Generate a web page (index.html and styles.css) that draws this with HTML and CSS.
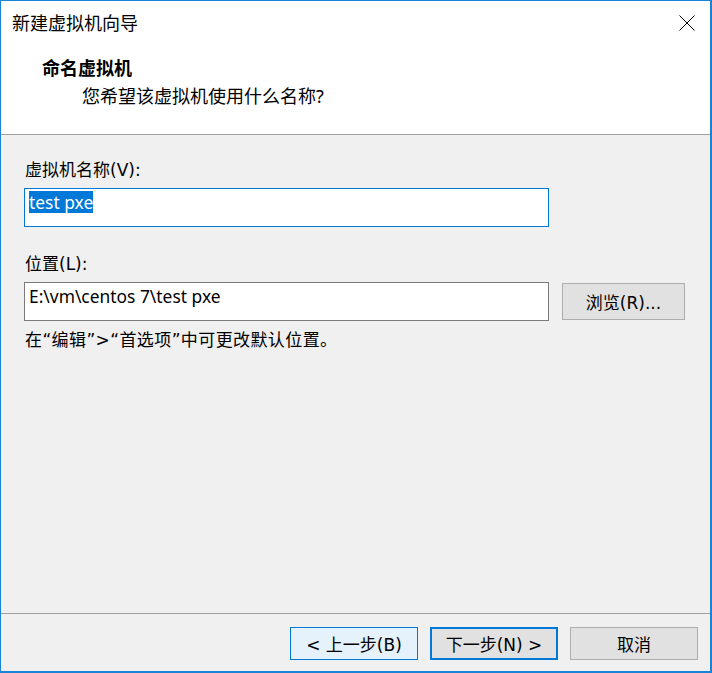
FILE: index.html
```html
<!DOCTYPE html>
<html lang="zh-CN">
<head>
<meta charset="utf-8">
<title>新建虚拟机向导</title>
<link rel="stylesheet" href="styles.css">
</head>
<body>
<div class="window">
  <div class="header">
    <div class="titlebar">
      <span class="title">新建虚拟机向导</span>
      <svg class="close" width="16" height="16" viewBox="0 0 16 16" aria-label="关闭">
        <path d="M0.5 0.5 L15.5 15.5 M15.5 0.5 L0.5 15.5" stroke="#000" stroke-width="1" fill="none"/>
      </svg>
    </div>
    <div class="heading">命名虚拟机</div>
    <div class="subtitle">您希望该虚拟机使用什么名称?</div>
  </div>
  <div class="content">
    <div class="label label-first">虚拟机名称(V):</div>
    <div class="field field-focus"><span class="selected">test pxe</span></div>
    <div class="label label-second">位置(L):</div>
    <div class="row">
      <div class="field">E:\vm\centos 7\test pxe</div>
      <button class="btn btn-browse">浏览(R)...</button>
    </div>
    <div class="hint">在“编辑”&gt;“首选项”中可更改默认位置。</div>
  </div>
  <div class="footer">
    <button class="btn btn-nav btn-hover">&lt; 上一步(B)</button>
    <button class="btn btn-nav btn-default">下一步(N) &gt;</button>
    <button class="btn btn-nav">取消</button>
  </div>
</div>
</body>
</html>
```
FILE: styles.css
```css
* { box-sizing: border-box; }
html, body { margin: 0; padding: 0; background: #ffffff; }
body {
  font-family: "DejaVu Sans", "Noto Sans CJK SC", sans-serif;
  font-size: 17px;
  color: #000;
}
.window {
  width: 712px;
  height: 673px;
  border-style: solid;
  border-color: #1883d7;
  border-width: 1px 2px 2px 1px;
  display: flex;
  flex-direction: column;
  background: #f0f0f0;
}
.header {
  height: 134px;
  flex: none;
  background: #ffffff;
  border-bottom: 1px solid #a0a0a0;
}
.titlebar {
  display: flex;
  align-items: center;
  justify-content: space-between;
  padding: 9px 15px 0 11px;
}
.title {
  font-family: "Noto Sans CJK SC", sans-serif;
  font-size: 18px;
  line-height: 24px;
}
.close { display: block; margin-top: 1px; }
.heading {
  font-family: "Noto Sans CJK SC", sans-serif;
  font-weight: bold;
  font-size: 18px;
  line-height: 24px;
  margin-top: 21px;
  padding-left: 41px;
}
.subtitle {
  font-family: "Noto Sans", "Noto Sans CJK SC", sans-serif;
  font-size: 18px;
  line-height: 24px;
  margin-top: 5px;
  padding-left: 81px;
}
.content {
  flex: 1;
  padding: 0 0 0 23px;
  border-bottom: 1px solid #a0a0a0;
}
.label {
  line-height: 24px;
  padding-left: 1px;
}
.label-first { margin-top: 23px; margin-bottom: 6px; }
.label-second { margin-top: 25px; margin-bottom: 6px; }
.field {
  width: 525px;
  height: 39px;
  border: 1px solid #7a7a7a;
  background: #ffffff;
  padding: 2px 4px 0 4px;
  font-family: "Noto Sans", "Noto Sans CJK SC", sans-serif;
  font-size: 17.4px;
  line-height: 22px;
  white-space: nowrap;
}
.field-focus { border-color: #0078d7; }
.selected {
  background: #0078d7;
  color: #ffffff;
  display: inline-block;
  line-height: 22px;
}
.row {
  display: flex;
  align-items: center;
  gap: 13px;
}
.btn {
  font-family: "DejaVu Sans", "Noto Sans CJK SC", sans-serif;
  font-size: 17px;
  color: #000;
  background: #e1e1e1;
  border: 1px solid #adadad;
  padding: 0;
  margin: 0;
  display: flex;
  align-items: center;
  justify-content: center;
}
.btn-browse { width: 123px; height: 37px; }
.hint {
  line-height: 24px;
  margin-top: 7px;
  padding-left: 1px;
  letter-spacing: 0.4px;
}
.footer {
  flex: none;
  height: 57px;
  display: flex;
  justify-content: flex-end;
  align-items: flex-start;
  gap: 12px;
  padding: 13px 12px 0 0;
}
.btn-nav { width: 128px; height: 33px; }
.btn-hover { background: #e5f1fb; border-color: #0078d7; }
.btn-default { border: 2px solid #0078d7; }
```
